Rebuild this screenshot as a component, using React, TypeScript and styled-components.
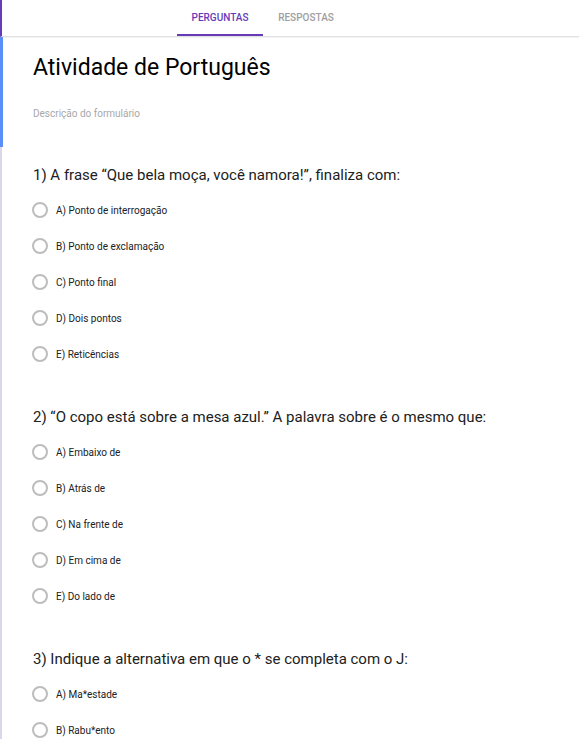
import React from "react";
import styled, { createGlobalStyle } from "styled-components";

const Global = createGlobalStyle`
  html, body { margin: 0; padding: 0; background: #fff; }
  body { font-family: Roboto, "Liberation Sans", Arial, sans-serif; }
  * { box-sizing: border-box; }
`;

const Page = styled.div`
  width: 579px;
  display: flex;
  flex-direction: column;
`;

const Header = styled.header`
  height: 37px;
  display: flex;
  align-items: stretch;
  padding-left: 175px;
  border-left: 2px solid #673ab7;
  border-bottom: 1px solid #e0e0e0;
  box-shadow: 0 1px 1px rgba(0, 0, 0, 0.04);
`;

const Tab = styled.div<{ $active?: boolean }>`
  width: 86px;
  display: flex;
  align-items: center;
  justify-content: center;
  font-size: 10px;
  font-weight: 500;
  color: ${(p) => (p.$active ? "#673ab7" : "#9e9e9e")};
  border-bottom: 2px solid ${(p) => (p.$active ? "#673ab7" : "transparent")};
`;

const Card = styled.section<{ $accent: string; $width: number }>`
  border-left: ${(p) => p.$width}px solid ${(p) => p.$accent};
  padding-left: ${(p) => 33 - p.$width}px;
`;

const TitleCard = styled(Card)`
  padding-top: 17px;
  padding-bottom: 26px;
`;

const Title = styled.h1`
  margin: 0;
  font-size: 23px;
  line-height: 28px;
  font-weight: 400;
  color: #000;
`;

const Description = styled.div`
  margin-top: 25px;
  font-size: 10px;
  line-height: 14px;
  color: #a8a8a8;
`;

const QuestionCard = styled(Card)`
  padding-top: 18px;
  padding-bottom: 17px;
`;

const QuestionTitle = styled.div`
  font-size: 15px;
  line-height: 20px;
  color: #212121;
  margin-bottom: 7px;
`;

const Option = styled.label`
  height: 36px;
  display: flex;
  align-items: center;
  gap: 8px;
  font-size: 10px;
  color: #202124;
`;

const Radio = styled.span`
  width: 16px;
  height: 16px;
  border-radius: 50%;
  border: 2px solid #bdbdbd;
  margin-left: -1px;
  flex: none;
`;

const questions = [
  {
    title: "1) A frase “Que bela moça, você namora!”, finaliza com:",
    options: [
      "A) Ponto de interrogação",
      "B) Ponto de exclamação",
      "C) Ponto final",
      "D) Dois pontos",
      "E) Reticências",
    ],
  },
  {
    title: "2) “O copo está sobre a mesa azul.” A palavra sobre é o mesmo que:",
    options: ["A) Embaixo de", "B) Atrás de", "C) Na frente de", "D) Em cima de", "E) Do lado de"],
  },
  {
    title: "3) Indique a alternativa em que o * se completa com o J:",
    options: ["A) Ma*estade", "B) Rabu*ento"],
  },
];

export default function App() {
  return (
    <Page>
      <Global />
      <Header>
        <Tab $active>PERGUNTAS</Tab>
        <Tab>RESPOSTAS</Tab>
      </Header>
      <TitleCard $accent="#5b8ff5" $width={3}>
        <Title>Atividade de Português</Title>
        <Description>Descrição do formulário</Description>
      </TitleCard>
      {questions.map((q) => (
        <QuestionCard key={q.title} $accent="#dcd7e8" $width={2}>
          <QuestionTitle>{q.title}</QuestionTitle>
          {q.options.map((o) => (
            <Option key={o}>
              <Radio />
              {o}
            </Option>
          ))}
        </QuestionCard>
      ))}
    </Page>
  );
}
